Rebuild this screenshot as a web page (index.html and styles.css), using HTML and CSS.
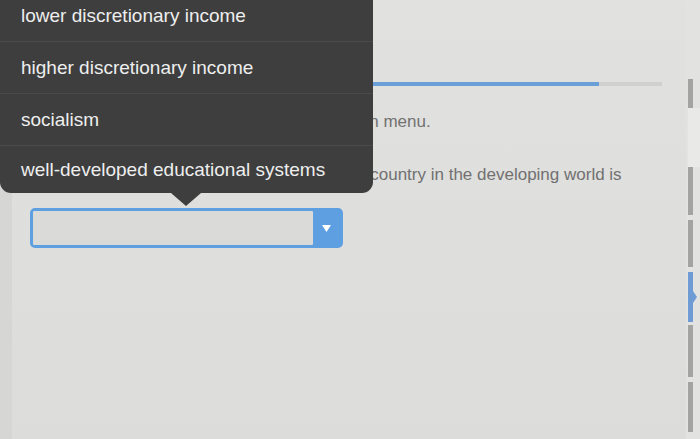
FILE: index.html
```html
<!DOCTYPE html>
<html lang="en">
<head>
<meta charset="utf-8">
<title>Question</title>
<link rel="stylesheet" href="styles.css">
</head>
<body>
<div class="screen">
  <div class="edge"></div>
  <main class="content">
    <div class="progress"><div class="progress-fill" style="width: 90%"></div></div>
    <p class="instructions">Choose the best answer from each drop-down menu.</p>
    <p class="question">One advantage of a developed nation over a country in the developing world is</p>
    <div class="select">
      <div class="select-value"></div>
      <div class="select-btn">
        <svg width="9" height="7" viewBox="0 0 9 7"><path d="M0 0 H9 L4.5 7 Z" fill="#ffffff"/></svg>
      </div>
    </div>
  </main>
  <aside class="rail">
    <div class="seg seg-gray s1"></div>
    <div class="seg seg-light s2"></div>
    <div class="seg seg-gray s3"></div>
    <div class="seg seg-gray s4"></div>
    <div class="seg seg-blue s5"><span class="pointer"></span></div>
    <div class="seg seg-gray s6"></div>
    <div class="seg seg-gray s7"></div>
  </aside>
</div>

<div class="popup">
  <ul class="menu">
    <li>lower discretionary income</li>
    <li>higher discretionary income</li>
    <li>socialism</li>
    <li>well-developed educational systems</li>
  </ul>
  <span class="popup-arrow"></span>
</div>
</body>
</html>
```

FILE: styles.css
```css
* { box-sizing: border-box; }
html, body { margin: 0; padding: 0; }
body {
  width: 700px;
  height: 439px;
  overflow: hidden;
  background: #dfdfdd;
  font-family: "Liberation Sans", Arial, sans-serif;
  position: relative;
}
.screen {
  display: flex;
  height: 439px;
}
.edge {
  width: 12px;
  background: #d6d6d4;
  flex: none;
}
.content {
  flex: 1;
  padding: 82px 24px 0 18px;
  background: linear-gradient(180deg, #e1e1df 0%, #dededc 60%, #dcdcda 100%);
}
.progress {
  height: 4px;
  background: #cfd0cf;
  width: 632px;
}
.progress-fill {
  height: 4px;
  background: #6a9fd8;
}
.instructions {
  margin: 26px 0 0;
  font-size: 17px;
  line-height: 20px;
  color: #727272;
  white-space: nowrap;
}
.question {
  margin: 33px 0 0;
  font-size: 17px;
  line-height: 20px;
  color: #717171;
  white-space: nowrap;
}
.select {
  margin-top: 23px;
  width: 313px;
  height: 40px;
  border: 3px solid #5e9fe2;
  border-radius: 5px;
  display: flex;
  background: #5e9fe2;
}
.select-value {
  flex: 1;
  background: #dadad9;
  border-radius: 1px;
}
.select-btn {
  width: 27px;
  display: flex;
  align-items: center;
  justify-content: center;
}
.rail {
  width: 14px;
  flex: none;
  display: flex;
  flex-direction: column;
  padding-top: 79px;
  padding-left: 2px;
  background: #e2e2e0;
}
.seg { width: 5px; position: relative; }
.seg-gray { background: #a3a3a2; }
.seg-light { background: #e9e9e8; width: 12px; }
.seg-blue { background: #6e9bd3; }
.s1 { height: 29px; }
.s2 { height: 59px; }
.s3 { height: 48px; margin-bottom: 5px; }
.s4 { height: 47px; margin-bottom: 5px; }
.s5 { height: 50px; margin-bottom: 3px; }
.s6 { height: 52px; margin-bottom: 5px; }
.s7 { height: 50px; }
.pointer {
  position: absolute;
  left: 5px;
  top: 19px;
  width: 0;
  height: 0;
  border-top: 6px solid transparent;
  border-bottom: 6px solid transparent;
  border-left: 4px solid #6e9bd3;
}
.popup {
  position: absolute;
  left: 0;
  top: -10px;
  width: 373px;
  height: 203px;
  background: #3e3e3e;
  border-radius: 0 0 11px 11px;
}
.menu {
  list-style: none;
  margin: 0;
  padding: 0;
}
.menu li {
  height: 52px;
  display: flex;
  align-items: center;
  padding-left: 21px;
  font-size: 19px;
  color: #eeeeee;
  white-space: nowrap;
  border-bottom: 1px solid #4a4a4a;
}
.menu li:last-child { border-bottom: none; height: 48px; }
.popup-arrow {
  position: absolute;
  left: 171px;
  top: 203px;
  width: 0;
  height: 0;
  border-left: 15px solid transparent;
  border-right: 15px solid transparent;
  border-top: 13px solid #3e3e3e;
}
```
